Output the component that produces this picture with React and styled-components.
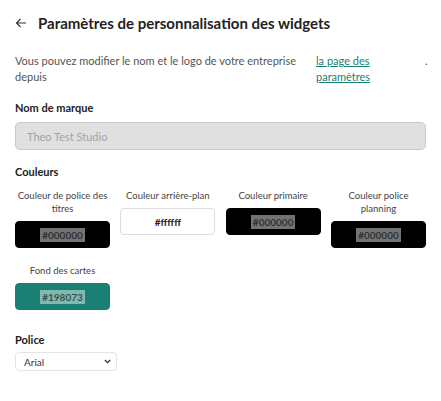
import React from 'react';
import styled, { createGlobalStyle } from 'styled-components';

const GlobalStyle = createGlobalStyle`
  body {
    margin: 0;
    background: #fff;
    font-family: Lato, 'Noto Sans', sans-serif;
    color: #222;
  }
`;

const Page = styled.div`
  padding: 12px 15px 20px;
  width: 411px;
`;

const Header = styled.div`
  display: flex;
  align-items: center;
  gap: 11px;
  height: 22px;

  h1 {
    margin: 0;
    font-size: 15px;
    font-weight: 700;
    color: #222;
  }
`;

const BackButton = styled.button`
  border: none;
  background: none;
  padding: 0;
  display: flex;
  color: #333;
  cursor: pointer;
`;

const Intro = styled.div`
  display: grid;
  grid-template-columns: 282px 90px 1fr;
  column-gap: 19px;
  margin-top: 19px;
  font-size: 11px;
  line-height: 16px;
  color: #555;

  a {
    color: #198073;
    text-decoration: underline;
    width: 60px;
  }

  span:last-child {
    text-align: right;
    padding-right: 1px;
  }
`;

const Label = styled.div`
  font-size: 11px;
  font-weight: 700;
  color: #222;
  line-height: 13px;
  margin: ${(p) => p.top || 22}px 0 ${(p) => p.bottom || 8}px;
`;

const TextInput = styled.input`
  display: block;
  box-sizing: border-box;
  width: 100%;
  height: 28px;
  padding: 0 11px;
  border: 1px solid #c8c8c8;
  border-radius: 5px;
  background: #e0e0e0;
  font-family: inherit;
  font-size: 11px;
  color: #999;

  &::placeholder {
    color: #a3a3a3;
  }
`;

const ColorGrid = styled.div`
  display: grid;
  grid-template-columns: repeat(4, 95px);
  justify-content: space-between;
  row-gap: 16px;
  align-items: start;
  margin-top: 11px;
`;

const ColorItem = styled.div`
  display: flex;
  flex-direction: column;
  align-items: center;
`;

const ColorName = styled.div`
  font-size: 9.5px;
  line-height: 13px;
  color: #444;
  text-align: center;
  margin-bottom: 6px;
`;

const Swatch = styled.div`
  box-sizing: border-box;
  width: 95px;
  height: 27px;
  border-radius: 4px;
  background: ${(p) => p.color};
  border: 1px solid ${(p) => (p.color === '#ffffff' ? '#ddd' : p.color)};
  display: flex;
  align-items: center;
  justify-content: center;

  span {
    font-size: 10px;
    line-height: 12px;
    padding: 1px 2px;
    background: ${(p) =>
      p.color === '#ffffff' ? 'transparent' : 'rgba(255, 255, 255, 0.45)'};
    color: ${(p) => (p.color === '#ffffff' ? '#222' : 'rgba(0, 0, 0, 0.6)')};
    font-weight: 700;
  }
`;

const SelectWrap = styled.div`
  position: relative;
  width: 102px;

  svg {
    position: absolute;
    right: 6px;
    top: 7px;
    pointer-events: none;
  }
`;

const Select = styled.select`
  display: block;
  appearance: none;
  box-sizing: border-box;
  width: 102px;
  height: 19px;
  border: 1px solid #e4e4e4;
  border-radius: 4px;
  background: #fff;
  font-family: inherit;
  font-size: 10px;
  color: #333;
  padding: 0 8px;
`;

const colors = [
  { name: 'Couleur de police des titres', value: '#000000' },
  { name: 'Couleur arrière-plan', value: '#ffffff' },
  { name: 'Couleur primaire', value: '#000000' },
  { name: 'Couleur police planning', value: '#000000' },
  { name: 'Fond des cartes', value: '#198073' },
];

const ArrowLeft = () => (
  <svg width="12" height="12" viewBox="0 0 12 12" fill="none" stroke="#333" strokeWidth="1.2">
    <path d="M11 6H1.5M5.5 2L1.5 6l4 4" />
  </svg>
);

const Chevron = () => (
  <svg width="7" height="5" viewBox="0 0 7 5" fill="none" stroke="#333" strokeWidth="1.3">
    <path d="M0.8 1l2.7 2.7L6.2 1" />
  </svg>
);

const App = () => {
  return (
    <>
      <GlobalStyle />
      <Page>
        <Header>
          <BackButton>
            <ArrowLeft />
          </BackButton>
          <h1>Paramètres de personnalisation des widgets</h1>
        </Header>

        <Intro>
          <span>Vous pouvez modifier le nom et le logo de votre entreprise depuis</span>
          <a href="#">la page des paramètres</a>
          <span>.</span>
        </Intro>

        <Label top={16}>Nom de marque</Label>
        <TextInput placeholder="Theo Test Studio" disabled />

        <Label top={15}>Couleurs</Label>
        <ColorGrid>
          {colors.map((c, i) => (
            <ColorItem key={i}>
              <ColorName>{c.name}</ColorName>
              <Swatch color={c.value}>
                <span>{c.value}</span>
              </Swatch>
            </ColorItem>
          ))}
        </ColorGrid>

        <Label top={23} bottom={6}>Police</Label>
        <SelectWrap>
          <Select defaultValue="Arial">
            <option>Arial</option>
            <option>Helvetica</option>
            <option>Roboto</option>
          </Select>
          <Chevron />
        </SelectWrap>
      </Page>
    </>
  );
};

export default App;
